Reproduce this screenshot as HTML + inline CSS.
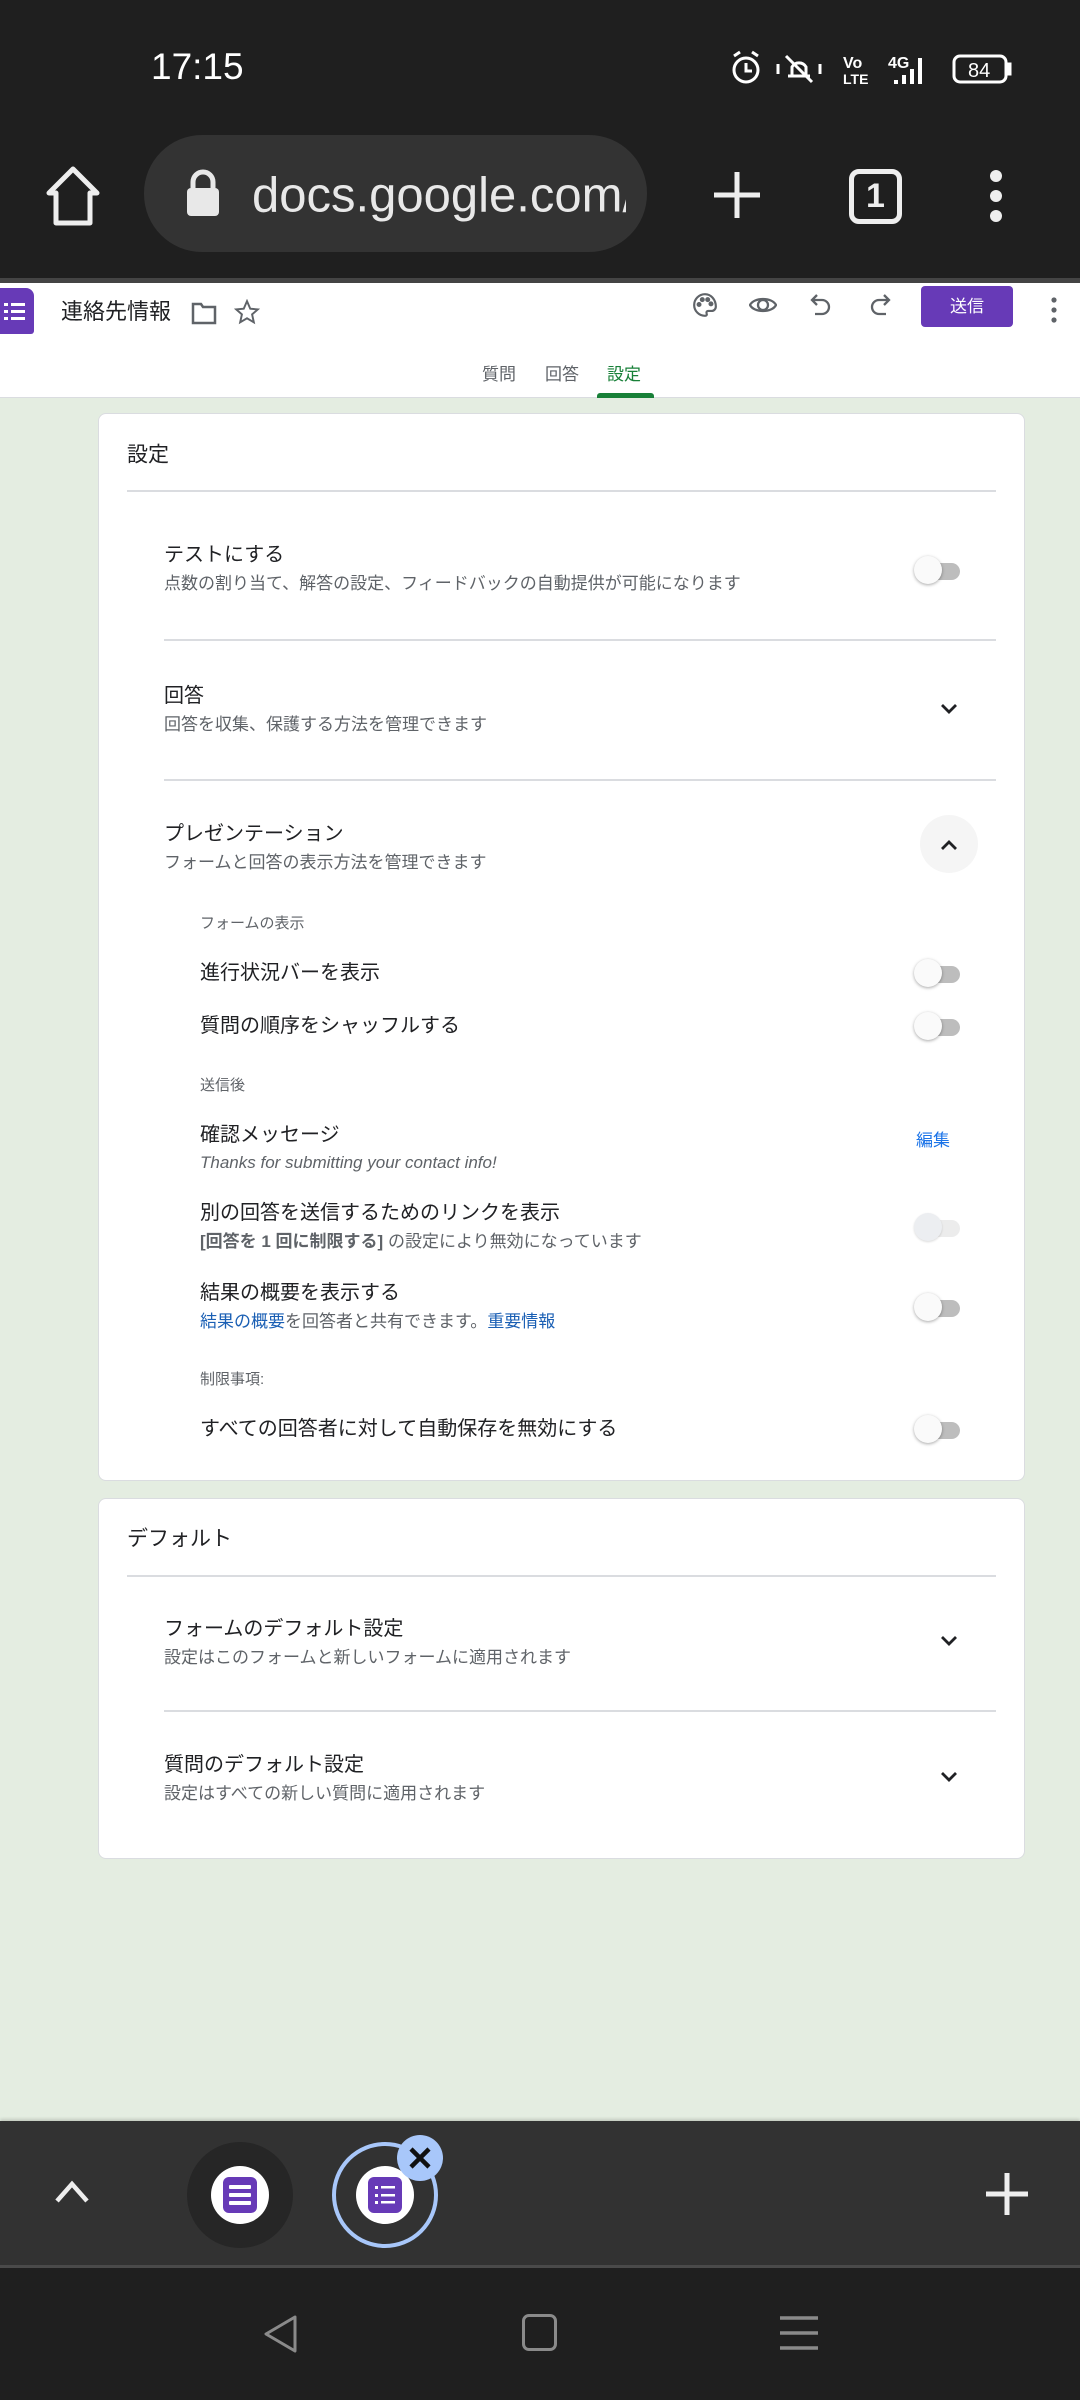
<!DOCTYPE html>
<html><head><meta charset="utf-8"><style>
*{margin:0;padding:0;box-sizing:border-box}
body{width:1080px;height:2400px;position:relative;overflow:hidden;background:#e4ede1;font-family:"Liberation Sans","Noto Sans CJK JP",sans-serif;color:#202124}
.a{position:absolute}
.t{position:absolute;transform:translateY(-50%);white-space:nowrap;line-height:1.2}
.h{font-size:20px;color:#202124}
.s{font-size:17px;color:#5f6368}
.sm{font-size:15px;color:#5f6368}
.card{position:absolute;left:98px;width:927px;background:#fff;border:1px solid #dadce0;border-radius:8px}
.div{position:absolute;height:1.5px;background:#dadce0}
.tg{position:absolute;width:46px;height:30px;transform:translateY(-50%)}
.tg .tr{position:absolute;left:4px;top:7px;width:42px;height:17px;border-radius:9px;background:#bdbdbd}
.tg .kn{position:absolute;left:0;top:0;width:28px;height:28px;border-radius:50%;background:#fafafa;box-shadow:0 1px 3px rgba(0,0,0,.35)}
.tg.dis .tr{background:#ececec}.tg.dis .kn{background:#eceef1;box-shadow:0 1px 2px rgba(0,0,0,.15)}
.chev{position:absolute;transform:translate(-50%,-50%)}
</style></head><body>
<div class="a" style="left:0;top:0;width:1080px;height:280px;background:#1f1f1f"></div>
<div class="t" style="left:151px;top:67px;font-size:37px;color:#fff">17:15</div>
<svg class="a" style="left:728px;top:48px" width="290" height="40" viewBox="0 0 290 40" fill="none" stroke="#fff" stroke-width="3">
<circle cx="18" cy="22" r="12"/><path d="M18 15v8h6M6 8l6-4M30 8l-6-4"/>
<path d="M60 28h22M64 28v-9a8 8 0 0 1 14 0v9M58 8l26 26M50 16v10M92 16v10"/>
<text x="115" y="20" fill="#fff" stroke="none" font-size="16" font-weight="bold" font-family="Liberation Sans">Vo</text><text x="115" y="36" fill="#fff" stroke="none" font-size="14" font-weight="bold" font-family="Liberation Sans">LTE</text>
<text x="160" y="20" fill="#fff" stroke="none" font-size="16" font-weight="bold" font-family="Liberation Sans">4G</text>
<path d="M168 36v-4M176 36v-9M184 36v-15M192 36v-26" stroke-width="4"/>
<rect x="226" y="8" width="52" height="26" rx="6"/><rect x="279" y="16" width="3" height="10" fill="#fff"/>
<text x="240" y="29" fill="#fff" stroke="none" font-size="20" font-family="Liberation Sans">84</text>
</svg>
<svg class="a" style="left:44px;top:165px" width="58" height="62" viewBox="0 0 58 62" fill="none" stroke="#eee" stroke-width="5" stroke-linejoin="round"><path d="M5 28L29 4l24 24h-7v30H12V28z"/></svg>
<div class="a" style="left:144px;top:135px;width:503px;height:117px;border-radius:58px;background:#333"></div>
<svg class="a" style="left:185px;top:168px" width="36" height="50" viewBox="0 0 36 50"><path d="M8 22v-8a10 10 0 0 1 20 0v8" fill="none" stroke="#e8e8e8" stroke-width="5"/><rect x="2" y="20" width="32" height="28" rx="4" fill="#e8e8e8"/></svg>
<div class="t" style="left:252px;top:196px;font-size:49px;color:#e8e8e8;width:374px;overflow:hidden">docs.google.com/</div>
<svg class="a" style="left:712px;top:170px" width="50" height="50"><path d="M25 2v46M2 25h46" stroke="#eee" stroke-width="5"/></svg>
<div class="a" style="left:849px;top:169px;width:53px;height:55px;border:5px solid #eee;border-radius:10px;color:#eee;font-size:34px;font-weight:bold;text-align:center;line-height:45px">1</div>
<svg class="a" style="left:984px;top:168px" width="24" height="56"><circle cx="12" cy="8" r="6" fill="#eee"/><circle cx="12" cy="28" r="6" fill="#eee"/><circle cx="12" cy="48" r="6" fill="#eee"/></svg>
<div class="a" style="left:0;top:278px;width:1080px;height:5px;background:#444"></div>
<div class="a" style="left:0;top:283px;width:1080px;height:115px;background:#fff;border-bottom:1px solid #dadce0"></div>
<div class="a" style="left:0;top:288px;width:34px;height:46px;background:#673ab7;border-radius:0 8px 3px 0"></div>
<svg class="a" style="left:4px;top:301px" width="22" height="22"><g fill="#fff"><rect x="0" y="2" width="4" height="3"/><rect x="7" y="2" width="14" height="3"/><rect x="0" y="9" width="4" height="3"/><rect x="7" y="9" width="14" height="3"/><rect x="0" y="16" width="4" height="3"/><rect x="7" y="16" width="14" height="3"/></g></svg>
<div class="t" style="left:61px;top:312px;font-size:22px">連絡先情報</div>
<svg class="a" style="left:191px;top:301px" width="26" height="24" fill="none" stroke="#5f6368" stroke-width="2.5"><path d="M2 3h8l2 3h12v16H2z"/></svg>
<svg class="a" style="left:234px;top:299px" width="26" height="26" viewBox="0 0 24 24" fill="none" stroke="#5f6368" stroke-width="1.8"><path d="M12 2l3 7 7 .6-5.3 4.6 1.6 7.3L12 17.8 5.7 21.5l1.6-7.3L2 9.6 9 9z"/></svg>
<svg class="a" style="left:692px;top:292px" width="26" height="26" viewBox="0 0 24 24" fill="none" stroke="#5f6368" stroke-width="2"><path d="M12 2a10 10 0 0 0 0 20c1.5 0 2-1 1.5-2s0-2.5 1.5-2.5H18a4 4 0 0 0 4-4C22 7 17.5 2 12 2z"/><circle cx="6.5" cy="11.5" r="1.3" fill="#5f6368"/><circle cx="9.5" cy="7" r="1.3" fill="#5f6368"/><circle cx="14.5" cy="7" r="1.3" fill="#5f6368"/><circle cx="17.5" cy="11" r="1.3" fill="#5f6368"/></svg>
<svg class="a" style="left:749px;top:294px" width="28" height="22" viewBox="0 0 28 22" fill="none" stroke="#5f6368" stroke-width="2.3"><path d="M1 11C5 3 23 3 27 11 23 19 5 19 1 11z"/><circle cx="14" cy="11" r="5"/></svg>
<svg class="a" style="left:810px;top:293px" width="22" height="26" viewBox="0 0 22 26" fill="none" stroke="#5f6368" stroke-width="2.3"><path d="M7 2L2 7l5 5M2 7h10a7 7 0 0 1 0 14H5"/></svg>
<svg class="a" style="left:869px;top:293px" width="22" height="26" viewBox="0 0 22 26" fill="none" stroke="#5f6368" stroke-width="2.3"><path d="M15 2l5 5-5 5M20 7H10a7 7 0 0 0 0 14h7"/></svg>
<div class="a" style="left:921px;top:286px;width:92px;height:41px;background:#673ab7;border-radius:4px;color:#fff;font-size:17px;text-align:center;line-height:41px">送信</div>
<svg class="a" style="left:1049px;top:296px" width="10" height="28"><circle cx="5" cy="4" r="2.6" fill="#5f6368"/><circle cx="5" cy="14" r="2.6" fill="#5f6368"/><circle cx="5" cy="24" r="2.6" fill="#5f6368"/></svg>
<div class="t" style="left:482px;top:375px;font-size:17px;color:#5f6368">質問</div>
<div class="t" style="left:545px;top:375px;font-size:17px;color:#5f6368">回答</div>
<div class="t" style="left:607px;top:375px;font-size:17px;color:#188038">設定</div>
<div class="a" style="left:597px;top:393px;width:57px;height:5px;background:#188038;border-radius:3px 3px 0 0"></div>

<div class="card" style="top:413px;height:1068px"></div>
<div class="t h" style="left:127px;top:455px;font-size:21px">設定</div>
<div class="div" style="left:127px;top:490px;width:869px"></div>

<div class="t h" style="left:164px;top:555px">テストにする</div>
<div class="t s" style="left:164px;top:584px">点数の割り当て、解答の設定、フィードバックの自動提供が可能になります</div>
<div class="tg" style="left:914px;top:571px"><div class="tr"></div><div class="kn"></div></div>
<div class="div" style="left:164px;top:639px;width:832px"></div>

<div class="t h" style="left:164px;top:696px">回答</div>
<div class="t s" style="left:164px;top:725px">回答を収集、保護する方法を管理できます</div>
<svg class="chev" style="left:949px;top:709px" width="18" height="12"><path d="M2 2l7 7 7-7" fill="none" stroke="#202124" stroke-width="2.8"/></svg>
<div class="div" style="left:164px;top:779px;width:832px"></div>

<div class="t h" style="left:164px;top:834px">プレゼンテーション</div>
<div class="t s" style="left:164px;top:863px">フォームと回答の表示方法を管理できます</div>
<div class="a" style="left:920px;top:815px;width:58px;height:58px;border-radius:50%;background:#f5f5f5"></div>
<svg class="chev" style="left:949px;top:845px" width="18" height="12"><path d="M2 10l7-7 7 7" fill="none" stroke="#202124" stroke-width="2.8"/></svg>

<div class="t sm" style="left:200px;top:924px">フォームの表示</div>
<div class="t h" style="left:200px;top:973px">進行状況バーを表示</div>
<div class="tg" style="left:914px;top:974px"><div class="tr"></div><div class="kn"></div></div>
<div class="t h" style="left:200px;top:1026px">質問の順序をシャッフルする</div>
<div class="tg" style="left:914px;top:1027px"><div class="tr"></div><div class="kn"></div></div>

<div class="t sm" style="left:200px;top:1086px">送信後</div>
<div class="t h" style="left:200px;top:1135px">確認メッセージ</div>
<div class="t s" style="left:200px;top:1163px;font-style:italic">Thanks for submitting your contact info!</div>
<div class="t" style="left:916px;top:1141px;font-size:17px;color:#1a73e8">編集</div>
<div class="t h" style="left:200px;top:1213px">別の回答を送信するためのリンクを表示</div>
<div class="t s" style="left:200px;top:1242px"><b style="color:#5f6368">[回答を 1 回に制限する]</b> の設定により無効になっています</div>
<div class="tg dis" style="left:914px;top:1228px"><div class="tr"></div><div class="kn"></div></div>
<div class="t h" style="left:200px;top:1293px">結果の概要を表示する</div>
<div class="t s" style="left:200px;top:1322px"><span style="color:#1a5fb4">結果の概要</span>を回答者と共有できます。<span style="color:#1a5fb4">重要情報</span></div>
<div class="tg" style="left:914px;top:1308px"><div class="tr"></div><div class="kn"></div></div>
<div class="t sm" style="left:200px;top:1380px">制限事項:</div>
<div class="t h" style="left:200px;top:1429px">すべての回答者に対して自動保存を無効にする</div>
<div class="tg" style="left:914px;top:1430px"><div class="tr"></div><div class="kn"></div></div>

<div class="card" style="top:1498px;height:361px"></div>
<div class="t h" style="left:127px;top:1539px;font-size:21px">デフォルト</div>
<div class="div" style="left:127px;top:1575px;width:869px"></div>
<div class="t h" style="left:164px;top:1629px">フォームのデフォルト設定</div>
<div class="t s" style="left:164px;top:1658px">設定はこのフォームと新しいフォームに適用されます</div>
<svg class="chev" style="left:949px;top:1641px" width="18" height="12"><path d="M2 2l7 7 7-7" fill="none" stroke="#202124" stroke-width="2.8"/></svg>
<div class="div" style="left:164px;top:1710px;width:832px"></div>
<div class="t h" style="left:164px;top:1765px">質問のデフォルト設定</div>
<div class="t s" style="left:164px;top:1794px">設定はすべての新しい質問に適用されます</div>
<svg class="chev" style="left:949px;top:1777px" width="18" height="12"><path d="M2 2l7 7 7-7" fill="none" stroke="#202124" stroke-width="2.8"/></svg>

<div class="a" style="left:0;top:2121px;width:1080px;height:147px;background:#323232;box-shadow:0 -2px 3px rgba(0,0,0,.15)"></div>
<div class="a" style="left:0;top:2265px;width:1080px;height:3px;background:#4a4a4a"></div>
<svg class="a" style="left:54px;top:2180px" width="36" height="24"><path d="M3 21L18 4l15 17" fill="none" stroke="#eee" stroke-width="4.5"/></svg>
<div class="a" style="left:187px;top:2142px;width:106px;height:106px;border-radius:50%;background:#262626"></div>
<div class="a" style="left:211px;top:2166px;width:58px;height:58px;border-radius:50%;background:#fff"></div>
<div class="a" style="left:223px;top:2177px;width:34px;height:36px;border-radius:6px;background:#673ab7"></div>
<svg class="a" style="left:229px;top:2184px" width="22" height="22"><g fill="#fff"><rect x="0" y="1" width="22" height="4" rx="1"/><rect x="0" y="9" width="22" height="4" rx="1"/><rect x="0" y="17" width="22" height="4" rx="1"/></g></svg>
<div class="a" style="left:332px;top:2142px;width:106px;height:106px;border-radius:50%;border:4px solid #a8c7fa"></div>
<div class="a" style="left:356px;top:2166px;width:58px;height:58px;border-radius:50%;background:#fff"></div>
<div class="a" style="left:368px;top:2177px;width:34px;height:36px;border-radius:6px;background:#673ab7"></div>
<svg class="a" style="left:374px;top:2184px" width="22" height="22"><g fill="#fff"><rect x="1" y="2" width="3" height="3"/><rect x="7" y="2" width="14" height="2.5"/><rect x="1" y="10" width="3" height="3"/><rect x="7" y="10" width="14" height="2.5"/><rect x="1" y="17" width="3" height="3"/><rect x="7" y="17" width="14" height="2.5"/></g></svg>
<div class="a" style="left:397px;top:2135px;width:46px;height:46px;border-radius:50%;background:#a8c7fa"></div>
<svg class="a" style="left:406px;top:2144px" width="28" height="28"><path d="M5 5l18 18M23 5L5 23" stroke="#111" stroke-width="4.5"/></svg>
<svg class="a" style="left:985px;top:2172px" width="44" height="44"><path d="M22 1v42M1 22h42" stroke="#eee" stroke-width="5"/></svg>
<div class="a" style="left:0;top:2268px;width:1080px;height:132px;background:#1f1f1f"></div>
<svg class="a" style="left:262px;top:2314px" width="36" height="40"><path d="M33 3L4 20l29 17z" fill="none" stroke="#8a8a8a" stroke-width="3" stroke-linejoin="round"/></svg>
<div class="a" style="left:522px;top:2314px;width:35px;height:37px;border:3px solid #8a8a8a;border-radius:7px"></div>
<svg class="a" style="left:780px;top:2315px" width="38" height="36"><path d="M0 3h38M0 18h38M0 33h38" stroke="#8a8a8a" stroke-width="3.5"/></svg>
</body></html>
